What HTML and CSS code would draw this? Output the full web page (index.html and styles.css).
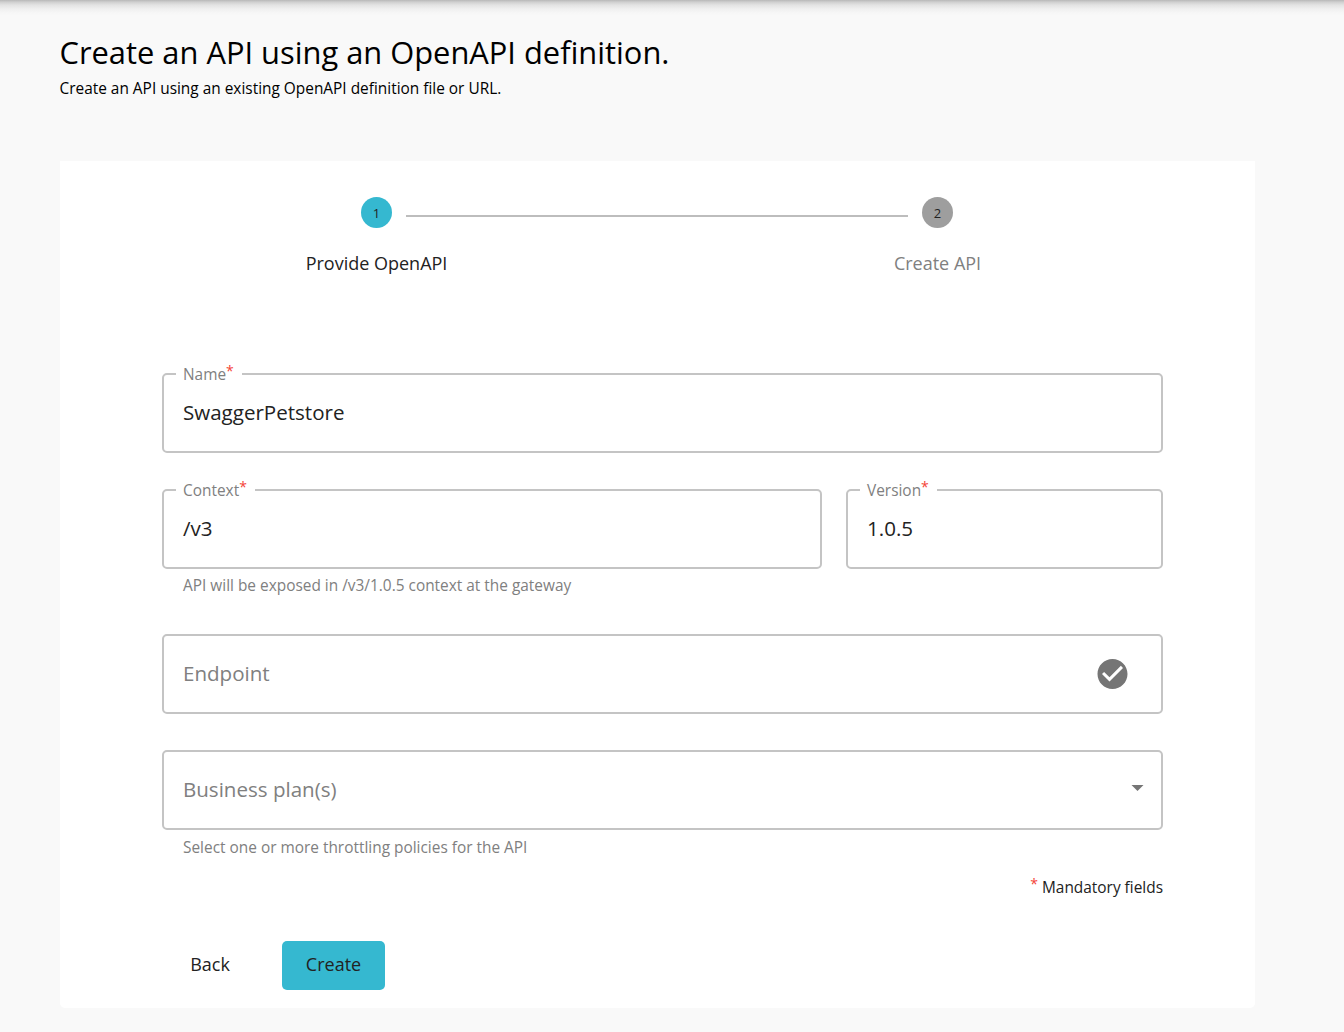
FILE: index.html
```html
<!DOCTYPE html>
<html lang="en">
<head>
<meta charset="utf-8">
<title>Create an API</title>
<link rel="stylesheet" href="styles.css">
</head>
<body>
<div class="top-shadow"></div>
<main class="page">
  <header class="heading">
    <h1 class="title">Create an API using an OpenAPI definition.</h1>
    <p class="subtitle">Create an API using an existing OpenAPI definition file or URL.</p>
  </header>
  <section class="card">
    <div class="stepper">
      <div class="step step-active"><span class="badge">1</span><span class="step-label">Provide OpenAPI</span></div>
      <div class="connector"></div>
      <div class="step"><span class="badge">2</span><span class="step-label">Create API</span></div>
    </div>
    <form class="form">
      <fieldset class="field">
        <legend class="label">Name<span class="star">*</span></legend>
        <span class="value">SwaggerPetstore</span>
      </fieldset>
      <div class="row">
        <fieldset class="field">
          <legend class="label">Context<span class="star">*</span></legend>
          <span class="value">/v3</span>
        </fieldset>
        <fieldset class="field">
          <legend class="label">Version<span class="star">*</span></legend>
          <span class="value">1.0.5</span>
        </fieldset>
      </div>
      <p class="helper">API will be exposed in /v3/1.0.5 context at the gateway</p>
      <div class="field endpoint">
        <span class="placeholder">Endpoint</span>
        <svg class="check" viewBox="2 2 20 20"><path d="M12 2C6.48 2 2 6.48 2 12s4.48 10 10 10 10-4.48 10-10S17.52 2 12 2zm-2 15l-5-5 1.41-1.41L10 14.17l7.59-7.59L19 8l-9 9z"/></svg>
      </div>
      <div class="field plans">
        <span class="placeholder">Business plan(s)</span>
        <svg class="arrow" viewBox="7 10 10 5"><path d="M7 10l5 5 5-5z"/></svg>
      </div>
      <p class="helper plans-helper">Select one or more throttling policies for the API</p>
      <p class="mandatory"><span class="star">*</span> Mandatory fields</p>
      <div class="actions">
        <button class="button" type="button">Back</button>
        <button class="button primary" type="button">Create</button>
      </div>
    </form>
  </section>
</main>
</body>
</html>
```
FILE: styles.css
```css
* { box-sizing: border-box; }

body {
  margin: 0;
  height: 1032px;
  overflow: hidden;
  background: #f9f9f9;
  color: #222;
  font-family: "Open Sans", sans-serif;
  font-size: 15.42px;
}

h1, p { margin: 0; font-weight: 400; }

.top-shadow {
  height: 16px;
  background: linear-gradient(#b8b8b8 0, #cfcfcf 2px, #e3e3e3 5px, #f0f0f0 9px, #f7f7f7 13px, #f9f9f9 16px);
}

.page { width: 1255px; padding-left: 60px; }
.heading { height: 145px; padding-top: 15px; color: #000; }
.title { margin-left: -0.5px; font-size: 30.85px; line-height: 42px; white-space: nowrap; }
.subtitle { margin-left: -0.5px; line-height: 22px; padding-top: 5px; }

.card {
  height: 847px;
  background: #fff;
  border-radius: 0 0 5px 5px;
  padding: 36px 92px 0 102px;
}

.stepper {
  display: flex;
  height: 176px;
  padding-left: 185px;
}
.step {
  display: flex;
  flex-direction: column;
  align-items: center;
  width: 59px;
  white-space: nowrap;
  color: #808080;
}
.step-active { color: #222; }
.badge {
  width: 31px;
  height: 31px;
  border-radius: 50%;
  background: #9e9e9e;
  color: #222;
  font-size: 13px;
  line-height: 32px;
  text-align: center;
}
.step-active .badge { background: #35b8d0; }
.step-label { margin-top: 23px; font-size: 18px; line-height: 25px; }
.connector { width: 502px; height: 2px; margin-top: 18px; background: #bdbdbd; }

.form { width: 1001px; }
.field {
  display: flex;
  align-items: center;
  width: 100%;
  min-width: 0;
  height: 80px;
  margin: 0;
  padding: 0 19px;
  border: 2px solid #c4c4c4;
  border-radius: 5px;
}
fieldset.field { padding: 0 12px; }
.label {
  height: 2px;
  padding: 0 7px;
  line-height: 4px;
  color: #808080;
}
.value { margin-left: 7px; font-size: 20.55px; line-height: 74px; margin-bottom: 2px; }
.placeholder { font-size: 20.55px; color: #808080; padding-bottom: 2px; }
.star { color: #f44336; font-size: 14px; line-height: 0; position: relative; top: -4px; }
.label .star { margin-right: 1px; }
.row { display: grid; grid-template-columns: 660px 317px; gap: 24px; margin-top: 36px; }
.helper { padding: 6px 21px 0; height: 29px; line-height: 22px; color: #808080; }
.plans-helper { padding-top: 7px; }
.endpoint { margin-top: 36px; justify-content: space-between; padding-right: 33px; }
.plans { margin-top: 36px; justify-content: space-between; padding-right: 17px; }
.check { width: 31px; height: 30px; fill: #757575; }
.arrow { width: 13px; height: 6px; margin-bottom: 4px; fill: #757575; }
.mandatory { margin-top: 18px; height: 22px; line-height: 22px; text-align: right; }
.actions { display: flex; gap: 24px; margin-top: 42px; }
.button {
  width: 96px;
  height: 49px;
  border: 0;
  border-radius: 5px;
  padding: 0 0 3px;
  background: transparent;
  color: #222;
  font: 18px "Open Sans", sans-serif;
}
.primary { width: 103px; background: #35b8d0; }
```
